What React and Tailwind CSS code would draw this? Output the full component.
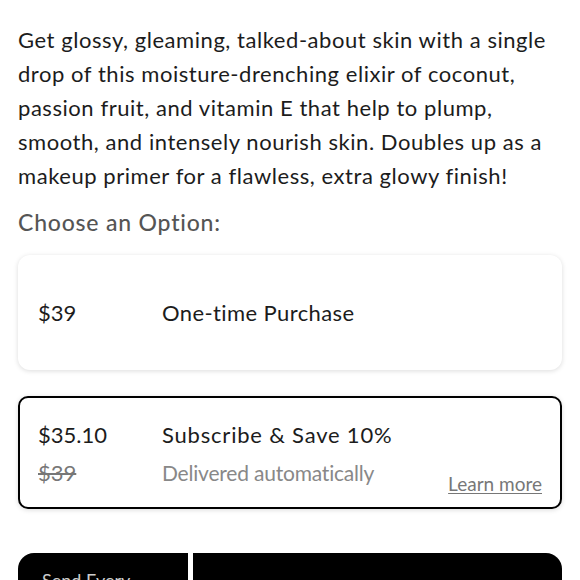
const lines = [
  'Get glossy, gleaming, talked-about skin with a single',
  'drop of this moisture-drenching elixir of coconut,',
  'passion fruit, and vitamin E that help to plump,',
  'smooth, and intensely nourish skin. Doubles up as a',
  'makeup primer for a flawless, extra glowy finish!',
]

export default function App() {
  return (
    <div className="bg-white w-[580px] h-[580px] overflow-hidden font-['Lato',sans-serif] text-[#1c1c1c]">
      <div className="px-[18px] pt-[23px]">
        <p className="text-[22px] leading-[34px] tracking-[0.55px] whitespace-nowrap">
          {lines.map((l) => (
            <span key={l} className="block">{l}</span>
          ))}
        </p>
        <h3 className="mt-[12px] text-[23px] leading-[34px] tracking-[0.8px] text-[#555] font-medium">Choose an Option:</h3>

        <div className="mt-[16px] h-[115px] rounded-[12px] bg-white shadow-[0_1px_5px_rgba(0,0,0,0.14)] flex items-center px-[20px] text-[22px]">
          <span className="w-[124px]">$39</span>
          <span className="tracking-[0.4px]">One-time Purchase</span>
        </div>

        <div className="mt-[26px] h-[113px] rounded-[10px] border-2 border-black bg-white shadow-[0_1px_5px_rgba(0,0,0,0.14)] flex items-stretch px-[18px] pt-[20px] pb-[14px]">
          <div className="w-[124px] flex flex-col">
            <span className="text-[22px] leading-[34px]">$35.10</span>
            <span className="text-[22px] leading-[34px] text-[#777] line-through mt-[4px]">$39</span>
          </div>
          <div className="flex flex-col flex-1">
            <span className="text-[22px] leading-[34px] tracking-[0.8px]">Subscribe &amp; Save 10%</span>
            <span className="text-[21px] leading-[34px] text-[#888] mt-[4px] tracking-[-0.2px]">Delivered automatically</span>
          </div>
          <div className="flex items-end mb-[-5px]">
            <a className="text-[19px] text-[#777] underline underline-offset-2">Learn more</a>
          </div>
        </div>

        <div className="mt-[44px] flex gap-[5px]">
          <div className="w-[170px] h-[60px] bg-black rounded-tl-[16px] px-[24px] pt-[14px] text-[18px] text-[#ccc]">
            Send Every
          </div>
          <div className="flex-1 h-[60px] bg-black rounded-tr-[16px]"></div>
        </div>
      </div>
    </div>
  )
}
